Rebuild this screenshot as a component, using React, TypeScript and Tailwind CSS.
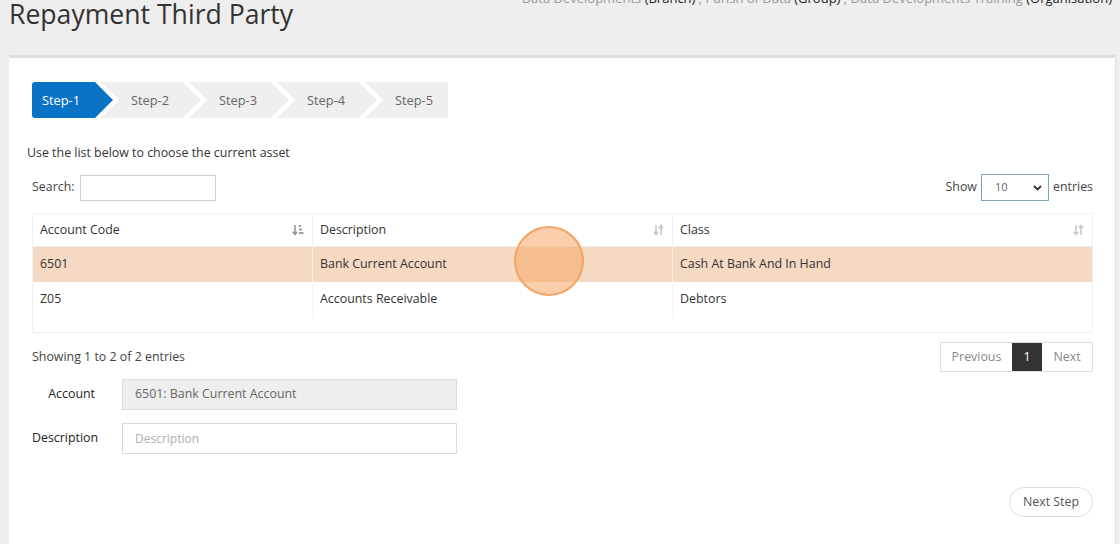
import React from "react";

function SortBoth() {
  return (
    <svg width="11" height="12" viewBox="0 0 11 12" className="text-[#c8c8c8]">
      <path d="M3 1v9M0.8 7.8L3 10.5 5.2 7.8" stroke="currentColor" strokeWidth="1.6" fill="none" />
      <path d="M8 11V2M5.8 4.2L8 1.5 10.2 4.2" stroke="currentColor" strokeWidth="1.6" fill="none" />
    </svg>
  );
}

function SortAsc() {
  return (
    <svg width="12" height="12" viewBox="0 0 12 12" className="text-[#9a9a9a]">
      <path d="M3 1v9M0.8 7.8L3 10.5 5.2 7.8" stroke="currentColor" strokeWidth="1.6" fill="none" />
      <rect x="7" y="1" width="2" height="2" fill="currentColor" />
      <rect x="7" y="4.5" width="3" height="2" fill="currentColor" />
      <rect x="7" y="8" width="4.5" height="2" fill="currentColor" />
    </svg>
  );
}

const steps = ["Step-1", "Step-2", "Step-3", "Step-4", "Step-5"];

export default function App() {
  return (
    <div
      className="w-[1120px] h-[544px] overflow-hidden bg-[#efeeef] text-[12.4px] text-[#333]"
      style={{ fontFamily: '"Open Sans", "Noto Sans", sans-serif' }}
    >
      {/* Header */}
      <div className="flex justify-between h-[55px]">
        <h1 className="pl-[9px] text-[26.6px] leading-[29px] text-[#333] font-normal whitespace-nowrap">Repayment Third Party</h1>
        <div className="-mt-[11px] pr-[8px] leading-[18px] text-[13px] whitespace-nowrap">
          <span className="text-[#999]">Data Developments </span>
          <span className="text-[#222]">(Branch)</span>
          <span className="text-[#999]"> ; Parish of Data </span>
          <span className="text-[#222]">(Group)</span>
          <span className="text-[#999]"> ; Data Developments Training </span>
          <span className="text-[#222]">(Organisation)</span>
        </div>
      </div>

      {/* Card */}
      <div className="ml-[9px] w-[1107px] h-[489px] bg-white border-t-[3px] border-t-[#dcdde1] border-r border-r-[#dedede] pt-[24px] pl-[23px] pr-[22px]">
        {/* Steps */}
        <div className="flex h-[36px] text-[12.8px]">
          {steps.map((s, i) => {
            const first = i === 0;
            const last = i === steps.length - 1;
            let cls = "";
            if (first)
              cls =
                "w-[81px] pl-[10px] bg-[#0b73c5] text-white rounded-l-[3px] [clip-path:polygon(0_0,63px_0,100%_50%,63px_100%,0_100%)]";
            else if (last)
              cls =
                "w-[83px] -ml-[12px] pl-[30px] bg-[#efefef] text-[#666] rounded-r-[3px] [clip-path:polygon(0_0,100%_0,100%_100%,0_100%,18px_50%)]";
            else
              cls =
                "w-[100px] -ml-[12px] pl-[30px] bg-[#efefef] text-[#666] [clip-path:polygon(0_0,82px_0,100%_50%,82px_100%,0_100%,18px_50%)]";
            return (
              <div key={s} className={`flex items-center pt-[1px] h-[36px] shrink-0 ${cls}`}>
                {s}
              </div>
            );
          })}
        </div>

        <p className="mt-[26px] -ml-[5px] leading-[18px]">Use the list below to choose the current asset</p>

        {/* Search + show */}
        <div className="mt-[12px] flex items-center justify-between h-[27px]">
          <div className="flex items-center">
            <span className="text-[#444]">Search:</span>
            <input className="ml-[5px] w-[136px] h-[26px] border border-[#d0d0d0] outline-none" />
          </div>
          <div className="flex items-center">
            <span className="text-[#444] mr-[4px]">Show</span>
            <div className="w-[68px] h-[27px] border border-[#7ea6b8] flex items-center justify-between pl-[13px] pr-[6px] text-[11px] text-[#666]">
              <span>10</span>
              <svg width="9" height="6" viewBox="0 0 9 6">
                <path d="M1 1l3.5 3.5L8 1" stroke="#333" strokeWidth="1.8" fill="none" />
              </svg>
            </div>
            <span className="text-[#444] ml-[4px]">entries</span>
          </div>
        </div>

        {/* Table */}
        <div className="relative mt-[12px] border border-[#f1f1f1] pb-[16px]">
          <div className="grid grid-cols-[280px_360px_1fr] h-[33px] items-center border-b border-b-[#efefef]">
            <div className="flex items-center justify-between h-full pl-[7px] pr-[8px] border-r border-r-[#f1f1f1]">
              <span>Account Code</span>
              <SortAsc />
            </div>
            <div className="flex items-center justify-between h-full pl-[7px] pr-[8px] border-r border-r-[#f1f1f1]">
              <span>Description</span>
              <SortBoth />
            </div>
            <div className="flex items-center justify-between h-full pl-[7px] pr-[8px]">
              <span>Class</span>
              <SortBoth />
            </div>
          </div>
          <div className="grid grid-cols-[280px_360px_1fr] h-[35px] items-center bg-[#f5d9c3]">
            <div className="flex items-center h-full pl-[7px] border-r border-r-[#fbeee4]">6501</div>
            <div className="flex items-center h-full pl-[7px] border-r border-r-[#fbeee4]">Bank Current Account</div>
            <div className="flex items-center h-full pl-[7px]">Cash At Bank And In Hand</div>
          </div>
          <div className="grid grid-cols-[280px_360px_1fr] h-[34px] items-center">
            <div className="flex items-center h-full pl-[7px] border-r border-r-[#f4f4f4]">Z05</div>
            <div className="flex items-center h-full pl-[7px] border-r border-r-[#f4f4f4]">Accounts Receivable</div>
            <div className="flex items-center h-full pl-[7px]">Debtors</div>
          </div>

          {/* click indicator */}
          <div className="absolute left-[481px] top-[12px] w-[70px] h-[70px] rounded-full bg-[rgba(245,166,100,0.55)] border-[2px] border-[#f4a462]" />
        </div>

        {/* Showing + pagination */}
        <div className="mt-[9px] flex items-center justify-between h-[30px]">
          <span className="text-[#444]">Showing 1 to 2 of 2 entries</span>
          <div className="flex h-[30px] border border-[#dddddd] text-[#888]">
            <div className="w-[71px] flex items-center justify-center">Previous</div>
            <div className="w-[30px] flex items-center justify-center bg-[#333] text-white">1</div>
            <div className="w-[50px] flex items-center justify-center">Next</div>
          </div>
        </div>

        {/* Form */}
        <div className="mt-[7px] flex items-center h-[31px]">
          <label className="w-[63px] text-right text-[#222]">Account</label>
          <div className="ml-[27px] w-[335px] h-[31px] bg-[#eeeeee] border border-[#dadada] flex items-center pl-[12px] text-[#666]">
            6501: Bank Current Account
          </div>
        </div>
        <div className="mt-[13px] flex items-center h-[31px]">
          <label className="w-[90px] text-[#222]">Description</label>
          <input
            placeholder="Description"
            className="w-[335px] h-[31px] border border-[#dadada] pl-[12px] outline-none placeholder:text-[#b0b0b0] text-[12px]"
          />
        </div>

        <div className="mt-[33px] flex justify-end">
          <button className="w-[84px] h-[30px] rounded-full border border-[#dcdcdc] bg-white text-[#555]">
            Next Step
          </button>
        </div>
      </div>
    </div>
  );
}
